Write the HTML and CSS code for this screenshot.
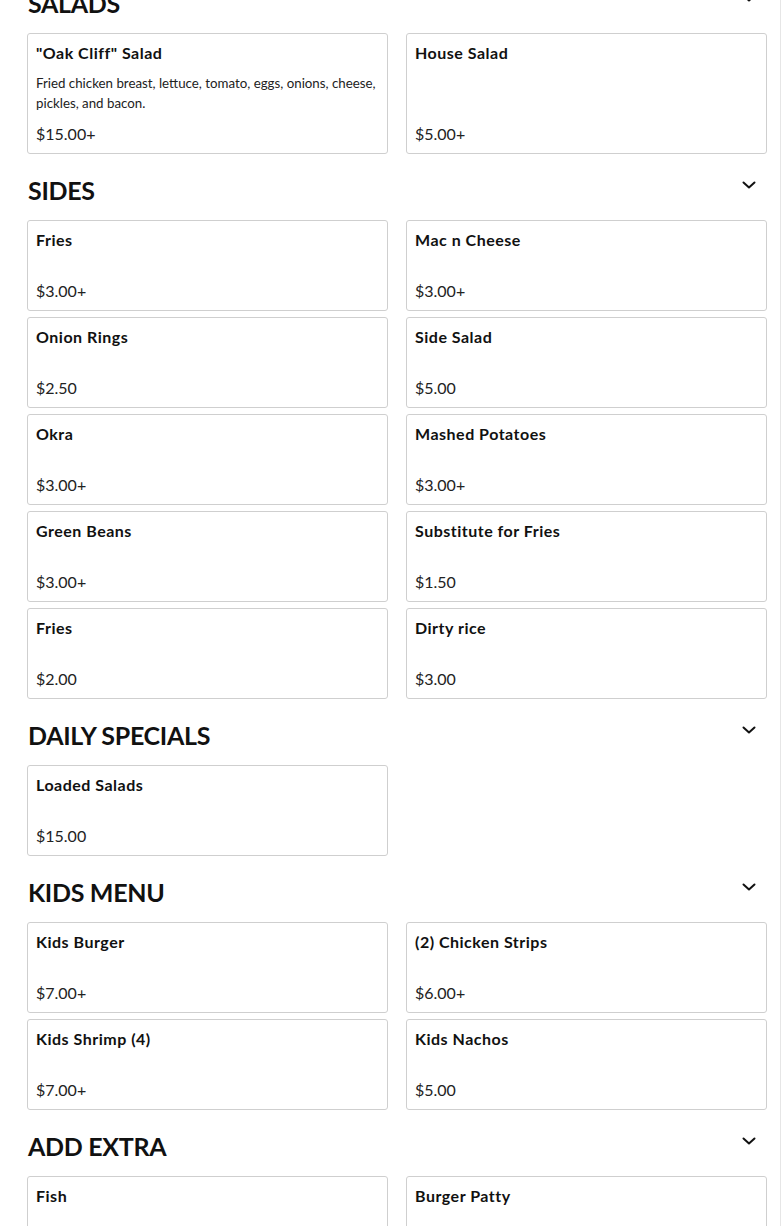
FILE: index.html
```html
<!DOCTYPE html>
<html lang="en">
<head>
<meta charset="utf-8">
<title>Menu</title>
<link rel="stylesheet" href="styles.css">
</head>
<body>
<div class="page">
  <main class="menu">
    <section class="section">
      <div class="section-head"><h2>SALADS</h2><svg class="chev" viewBox="0 0 14 8"><path d="M1.5 1.5 L7 6.5 L12.5 1.5"/></svg></div>
      <div class="grid">
        <div class="card"><div class="title">"Oak Cliff" Salad</div><div class="desc">Fried chicken breast, lettuce, tomato, eggs, onions, cheese, pickles, and bacon.</div><div class="price">$15.00+</div></div>
        <div class="card"><div class="title">House Salad</div><div class="price">$5.00+</div></div>
      </div>
    </section>
    <section class="section">
      <div class="section-head"><h2>SIDES</h2><svg class="chev" viewBox="0 0 14 8"><path d="M1.5 1.5 L7 6.5 L12.5 1.5"/></svg></div>
      <div class="grid">
        <div class="card"><div class="title">Fries</div><div class="price">$3.00+</div></div>
        <div class="card"><div class="title">Mac n Cheese</div><div class="price">$3.00+</div></div>
        <div class="card"><div class="title">Onion Rings</div><div class="price">$2.50</div></div>
        <div class="card"><div class="title">Side Salad</div><div class="price">$5.00</div></div>
        <div class="card"><div class="title">Okra</div><div class="price">$3.00+</div></div>
        <div class="card"><div class="title">Mashed Potatoes</div><div class="price">$3.00+</div></div>
        <div class="card"><div class="title">Green Beans</div><div class="price">$3.00+</div></div>
        <div class="card"><div class="title">Substitute for Fries</div><div class="price">$1.50</div></div>
        <div class="card"><div class="title">Fries</div><div class="price">$2.00</div></div>
        <div class="card"><div class="title">Dirty rice</div><div class="price">$3.00</div></div>
      </div>
    </section>
    <section class="section">
      <div class="section-head"><h2>DAILY SPECIALS</h2><svg class="chev" viewBox="0 0 14 8"><path d="M1.5 1.5 L7 6.5 L12.5 1.5"/></svg></div>
      <div class="grid">
        <div class="card"><div class="title">Loaded Salads</div><div class="price">$15.00</div></div>
      </div>
    </section>
    <section class="section">
      <div class="section-head"><h2>KIDS MENU</h2><svg class="chev" viewBox="0 0 14 8"><path d="M1.5 1.5 L7 6.5 L12.5 1.5"/></svg></div>
      <div class="grid">
        <div class="card"><div class="title">Kids Burger</div><div class="price">$7.00+</div></div>
        <div class="card"><div class="title">(2) Chicken Strips</div><div class="price">$6.00+</div></div>
        <div class="card"><div class="title">Kids Shrimp (4)</div><div class="price">$7.00+</div></div>
        <div class="card"><div class="title">Kids Nachos</div><div class="price">$5.00</div></div>
      </div>
    </section>
    <section class="section">
      <div class="section-head"><h2>ADD EXTRA</h2><svg class="chev" viewBox="0 0 14 8"><path d="M1.5 1.5 L7 6.5 L12.5 1.5"/></svg></div>
      <div class="grid">
        <div class="card"><div class="title">Fish</div><div class="price">$5.00</div></div>
        <div class="card"><div class="title">Burger Patty</div><div class="price">$4.00</div></div>
      </div>
    </section>
  </main>
</div>
</body>
</html>
```

FILE: styles.css
```css
html, body {
  margin: 0;
  padding: 0;
  background: #fff;
}
body {
  font-family: Lato, "Noto Sans", "Liberation Sans", sans-serif;
  color: #111;
  overflow: hidden;
}
.page {
  width: 781px;
  border-right: 1px solid #e6e6e6;
  min-height: 1226px;
  box-sizing: border-box;
}
.menu {
  padding: 0 14px 0 27px;
  margin-top: -15px;
}
.section-head {
  display: flex;
  align-items: center;
  justify-content: space-between;
  height: 36px;
  margin-top: 18px;
  margin-bottom: 12px;
}
.section:first-child .section-head {
  margin-top: 0;
}
.section-head h2 {
  margin: 0 0 0 1px;
  font-size: 25px;
  font-weight: 700;
  line-height: 36px;
  letter-spacing: -0.3px;
  color: #111;
}
.chev {
  width: 14px;
  height: 8px;
  margin-right: 10px;
  margin-top: -10px;
  fill: none;
  stroke: #111;
  stroke-width: 2;
  stroke-linecap: round;
  stroke-linejoin: round;
}
.grid {
  display: grid;
  grid-template-columns: 361px 361px;
  column-gap: 18px;
  row-gap: 6px;
}
.card {
  border: 1px solid #cfcfcf;
  border-radius: 3px;
  padding: 9px 8px 9px 8px;
  min-height: 91px;
  box-sizing: border-box;
  display: flex;
  flex-direction: column;
}
.title {
  font-size: 16px;
  font-weight: 700;
  line-height: 20px;
  letter-spacing: 0.5px;
}
.desc {
  font-size: 13.3px;
  line-height: 20px;
  margin-top: 10px;
  margin-bottom: 11px;
  color: #222;
}
.price {
  margin-top: auto;
  font-size: 16px;
  line-height: 20px;
  color: #222;
}
```
